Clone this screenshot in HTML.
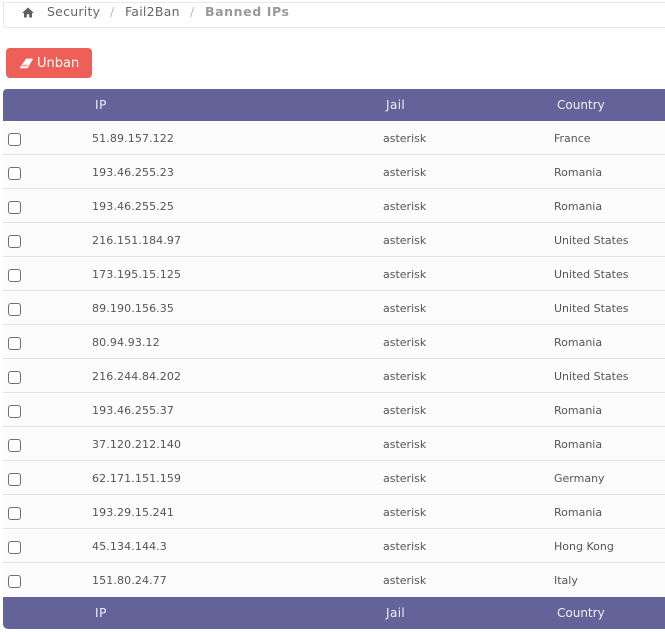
<!DOCTYPE html>
<html><head><meta charset="utf-8"><style>
html,body{margin:0;padding:0;background:#fff;width:665px;height:632px;overflow:hidden}
body{position:relative;font-family:"DejaVu Sans","Liberation Sans",sans-serif;color:#555}
.a{position:absolute;white-space:nowrap}
.crumbs{left:3px;top:2px;width:680px;height:24px;border:1px solid #e8e8e8;border-radius:0 0 4px 4px;box-sizing:content-box}
.bc{font-size:12.5px;line-height:16px;top:4px;color:#666;letter-spacing:.25px}
.btn{left:6px;top:48px;width:86px;height:30px;background:#ed5f57;border-radius:4px}
.bar{left:3px;width:662px;height:32px;background:#646399}
.th{font-size:12px;line-height:16px;color:#f1f1f7}
.row{left:3px;width:662px;height:33px;background:#fcfcfc;border-bottom:1px solid #e3e3e3}
.td{font-size:11px;line-height:14px;color:#555}
.ip{letter-spacing:.12px}
.cb{left:8px;width:11px;height:11px;border:1px solid #6f6f6f;border-radius:3px;background:#fff}
</style></head><body>
<div class="a crumbs"></div>
<svg class="a" style="left:22px;top:7px" width="12" height="11" viewBox="0 0 12 11"><path d="M6 0.5L0.3 5.7L1 6.4L2 5.6V10.5H4.8V7.2H7.2V10.5H10V5.6L11 6.4L11.7 5.7Z" fill="#5f5f5f"/></svg>
<div class="a bc" style="left:47px">Security</div>
<div class="a bc" style="left:110px;color:#bbb">/</div>
<div class="a bc" style="left:125px">Fail2Ban</div>
<div class="a bc" style="left:190px;color:#bbb">/</div>
<div class="a bc" style="left:205px;font-weight:bold;color:#999;letter-spacing:.6px">Banned IPs</div>
<div class="a btn"></div>
<svg class="a" style="left:19px;top:58px" width="15" height="11" viewBox="0 0 15 11"><path d="M7.5 1.2H13.2L8.2 9.6H1.6Z" fill="#fff" stroke="#fff" stroke-width="1.2" stroke-linejoin="round"/><path d="M3.6 6.4H9.2L7.9 8.9H2.2Z" fill="#f6b5b0"/></svg>
<div class="a" style="left:37px;top:56px;font-size:13px;line-height:16px;color:#fff">Unban</div>
<div class="a bar" style="top:89px;border-radius:4px 0 0 0"></div>
<div class="a th" style="left:95px;top:97px;letter-spacing:.6px">IP</div>
<div class="a th" style="left:386px;top:97px;letter-spacing:.4px">Jail</div>
<div class="a th" style="left:557px;top:97px">Country</div>

<div class="a row" style="top:121px"></div><div class="a cb" style="top:133px"></div><div class="a td ip" style="left:92px;top:132px">51.89.157.122</div><div class="a td" style="left:383px;top:132px">asterisk</div><div class="a td" style="left:554px;top:132px">France</div>
<div class="a row" style="top:155px"></div><div class="a cb" style="top:167px"></div><div class="a td ip" style="left:92px;top:166px">193.46.255.23</div><div class="a td" style="left:383px;top:166px">asterisk</div><div class="a td" style="left:554px;top:166px">Romania</div>
<div class="a row" style="top:189px"></div><div class="a cb" style="top:201px"></div><div class="a td ip" style="left:92px;top:200px">193.46.255.25</div><div class="a td" style="left:383px;top:200px">asterisk</div><div class="a td" style="left:554px;top:200px">Romania</div>
<div class="a row" style="top:223px"></div><div class="a cb" style="top:235px"></div><div class="a td ip" style="left:92px;top:234px">216.151.184.97</div><div class="a td" style="left:383px;top:234px">asterisk</div><div class="a td" style="left:554px;top:234px">United States</div>
<div class="a row" style="top:257px"></div><div class="a cb" style="top:269px"></div><div class="a td ip" style="left:92px;top:268px">173.195.15.125</div><div class="a td" style="left:383px;top:268px">asterisk</div><div class="a td" style="left:554px;top:268px">United States</div>
<div class="a row" style="top:291px"></div><div class="a cb" style="top:303px"></div><div class="a td ip" style="left:92px;top:302px">89.190.156.35</div><div class="a td" style="left:383px;top:302px">asterisk</div><div class="a td" style="left:554px;top:302px">United States</div>
<div class="a row" style="top:325px"></div><div class="a cb" style="top:337px"></div><div class="a td ip" style="left:92px;top:336px">80.94.93.12</div><div class="a td" style="left:383px;top:336px">asterisk</div><div class="a td" style="left:554px;top:336px">Romania</div>
<div class="a row" style="top:359px"></div><div class="a cb" style="top:371px"></div><div class="a td ip" style="left:92px;top:370px">216.244.84.202</div><div class="a td" style="left:383px;top:370px">asterisk</div><div class="a td" style="left:554px;top:370px">United States</div>
<div class="a row" style="top:393px"></div><div class="a cb" style="top:405px"></div><div class="a td ip" style="left:92px;top:404px">193.46.255.37</div><div class="a td" style="left:383px;top:404px">asterisk</div><div class="a td" style="left:554px;top:404px">Romania</div>
<div class="a row" style="top:427px"></div><div class="a cb" style="top:439px"></div><div class="a td ip" style="left:92px;top:438px">37.120.212.140</div><div class="a td" style="left:383px;top:438px">asterisk</div><div class="a td" style="left:554px;top:438px">Romania</div>
<div class="a row" style="top:461px"></div><div class="a cb" style="top:473px"></div><div class="a td ip" style="left:92px;top:472px">62.171.151.159</div><div class="a td" style="left:383px;top:472px">asterisk</div><div class="a td" style="left:554px;top:472px">Germany</div>
<div class="a row" style="top:495px"></div><div class="a cb" style="top:507px"></div><div class="a td ip" style="left:92px;top:506px">193.29.15.241</div><div class="a td" style="left:383px;top:506px">asterisk</div><div class="a td" style="left:554px;top:506px">Romania</div>
<div class="a row" style="top:529px"></div><div class="a cb" style="top:541px"></div><div class="a td ip" style="left:92px;top:540px">45.134.144.3</div><div class="a td" style="left:383px;top:540px">asterisk</div><div class="a td" style="left:554px;top:540px">Hong Kong</div>
<div class="a row" style="top:563px;border-bottom:0"></div><div class="a cb" style="top:575px"></div><div class="a td ip" style="left:92px;top:574px">151.80.24.77</div><div class="a td" style="left:383px;top:574px">asterisk</div><div class="a td" style="left:554px;top:574px">Italy</div>

<div class="a bar" style="top:597px;border-radius:0 0 0 5px"></div>
<div class="a th" style="left:95px;top:605px;letter-spacing:.6px">IP</div>
<div class="a th" style="left:386px;top:605px;letter-spacing:.4px">Jail</div>
<div class="a th" style="left:557px;top:605px">Country</div>
</body></html>
